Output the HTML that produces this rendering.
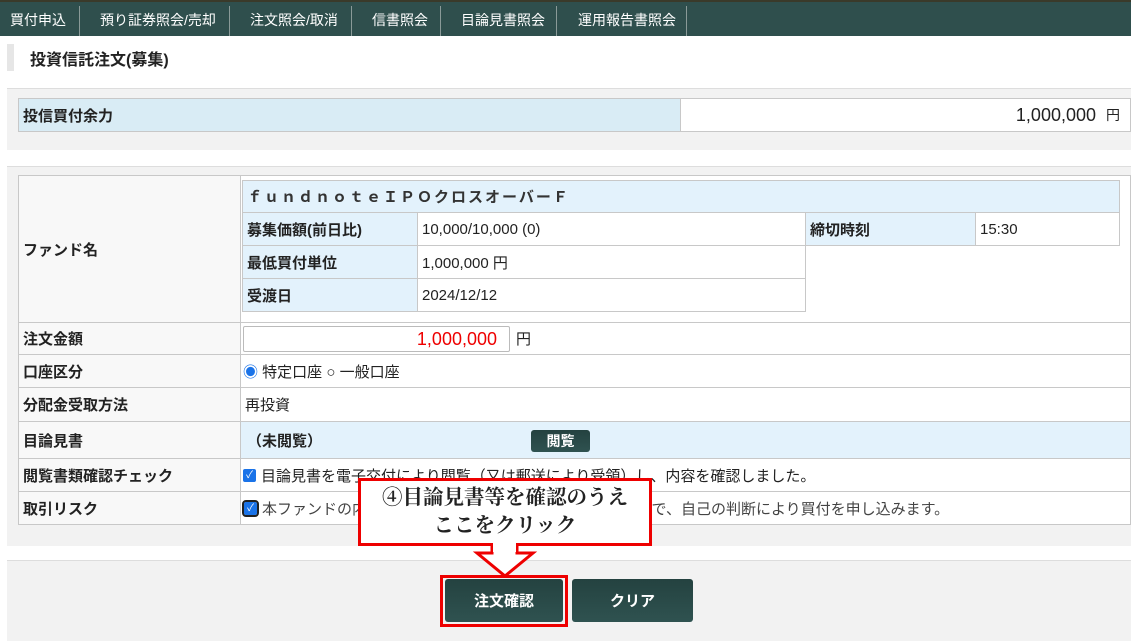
<!DOCTYPE html>
<html><head><meta charset="utf-8"><style>
*{margin:0;padding:0;box-sizing:border-box}
body{width:1131px;height:641px;background:#fff;font-family:"Liberation Sans","Noto Sans CJK JP",sans-serif;font-size:15px;color:#222;position:relative;overflow:hidden}
.a{position:absolute}
.nav{left:0;top:0;width:1131px;height:36px;background:#2f4f4d;border-top:2px solid #3a3a2a}
.nav span{position:absolute;top:8px;color:#fff;font-size:14px}
.sep{position:absolute;top:4px;width:1px;height:30px;background:#8a9a98}
.cell{position:absolute;border:1px solid #c8c8c8;display:flex;align-items:center;padding-left:4px}
.lb{background:#f8f8f8;font-weight:bold}
.bl{background:#e3f2fc;font-weight:bold}
.w{background:#fff}
.btn{position:absolute;background:linear-gradient(#244240,#2f5250);color:#fff;font-weight:bold;font-size:15px;display:flex;align-items:center;justify-content:center;border-radius:3px}
.cb{display:inline-block;width:13px;height:13px;background:#1a73e8;border-radius:2px;color:#fff;font-size:10px;line-height:13px;text-align:center;margin-right:5px;vertical-align:-1px}
</style></head><body>
<div class="a nav">
<span style="left:10px">買付申込</span><div class="sep" style="left:79px"></div>
<span style="left:100px">預り証券照会/売却</span><div class="sep" style="left:229px"></div>
<span style="left:250px">注文照会/取消</span><div class="sep" style="left:351px"></div>
<span style="left:372px">信書照会</span><div class="sep" style="left:440px"></div>
<span style="left:461px">目論見書照会</span><div class="sep" style="left:556px"></div>
<span style="left:578px">運用報告書照会</span><div class="sep" style="left:686px"></div>
</div>
<div class="a" style="left:7px;top:44px;width:7px;height:27px;background:#e6e6e6"></div>
<div class="a" style="left:30px;top:46px;font-weight:bold;font-size:16px">投資信託注文(募集)</div>

<div class="a" style="left:7px;top:88px;width:1124px;height:62px;background:#f2f2f2;border-top:1px solid #ddd"></div>
<div class="cell bl" style="left:18px;top:98px;width:663px;height:34px;background:#d9ecf5">投信買付余力</div>
<div class="cell w" style="left:680px;top:98px;width:451px;height:34px;justify-content:flex-end;padding-right:10px;font-size:18px">1,000,000 <span style="font-size:14px;margin-left:10px">円</span></div>

<div class="a" style="left:7px;top:166px;width:1124px;height:380px;background:#f2f2f2;border-top:1px solid #ddd"></div>
<div class="cell lb" style="left:18px;top:175px;width:223px;height:148px">ファンド名</div>
<div class="cell w" style="left:240px;top:175px;width:891px;height:148px"></div>
<div class="cell bl" style="left:242px;top:180px;width:878px;height:33px;font-weight:bold;letter-spacing:2px;color:#333">ｆｕｎｄｎｏｔｅＩＰＯクロスオーバーＦ</div>
<div class="cell bl" style="left:242px;top:212px;width:176px;height:34px">募集価額(前日比)</div>
<div class="cell w" style="left:417px;top:212px;width:389px;height:34px">10,000/10,000 (0)</div>
<div class="cell bl" style="left:805px;top:212px;width:171px;height:34px">締切時刻</div>
<div class="cell w" style="left:975px;top:212px;width:145px;height:34px">15:30</div>
<div class="cell bl" style="left:242px;top:245px;width:176px;height:34px">最低買付単位</div>
<div class="cell w" style="left:417px;top:245px;width:389px;height:34px">1,000,000 円</div>
<div class="cell bl" style="left:242px;top:278px;width:176px;height:34px">受渡日</div>
<div class="cell w" style="left:417px;top:278px;width:389px;height:34px">2024/12/12</div>

<div class="cell lb" style="left:18px;top:322px;width:223px;height:33px">注文金額</div>
<div class="cell w" style="left:240px;top:322px;width:891px;height:33px;padding-left:2px"><div style="width:267px;height:26px;border:1px solid #bbb;border-radius:2px;text-align:right;padding-right:12px;color:#e00;font-size:18px;line-height:24px">1,000,000</div><span style="margin-left:6px">円</span></div>
<div class="cell lb" style="left:18px;top:354px;width:223px;height:34px">口座区分</div>
<div class="cell w" style="left:240px;top:354px;width:891px;height:34px;padding-left:2px"><span style="color:#1a73e8">◉</span>&nbsp;特定口座 ○ 一般口座</div>
<div class="cell lb" style="left:18px;top:387px;width:223px;height:35px">分配金受取方法</div>
<div class="cell w" style="left:240px;top:387px;width:891px;height:35px">再投資</div>
<div class="cell lb" style="left:18px;top:421px;width:223px;height:38px">目論見書</div>
<div class="cell" style="left:240px;top:421px;width:891px;height:38px;background:#e3f2fc;font-weight:bold;padding-left:6px">（未閲覧）</div>
<div class="btn" style="left:531px;top:430px;width:59px;height:22px;font-size:14px">閲覧</div>
<div class="cell lb" style="left:18px;top:458px;width:223px;height:34px">閲覧書類確認チェック</div>
<div class="cell w" style="left:240px;top:458px;width:891px;height:34px;padding-left:2px"><span class="cb">✓</span>目論見書を電子交付により閲覧（又は郵送により受領）し、内容を確認しました。</div>
<div class="cell lb" style="left:18px;top:491px;width:223px;height:34px">取引リスク</div>
<div class="cell w" style="left:240px;top:491px;width:891px;height:34px;color:#444;padding-left:2px"><span class="cb" style="outline:2px solid #222;outline-offset:0;margin-left:1px">✓</span>本ファンドの内容と投資に伴うリスクを十分理解したうえで、自己の判断により買付を申し込みます。</div>

<div class="a" style="left:7px;top:560px;width:1124px;height:81px;background:#f2f2f2;border-top:1px solid #ddd"></div>
<div class="a" style="left:440px;top:575px;width:128px;height:52px;border:3px solid #e00"></div>
<div class="btn" style="left:445px;top:579px;width:118px;height:43px">注文確認</div>
<div class="btn" style="left:572px;top:579px;width:121px;height:43px">クリア</div>

<svg class="a" style="left:470px;top:538px" width="75" height="42"><polygon points="22,2 22,15 7,15 35,38 63,15 47,15 47,2" fill="#fff" stroke="#e00" stroke-width="3"/></svg>
<div class="a" style="left:358px;top:478px;width:294px;height:68px;border:3px solid #e00;background:#fff;font-family:'Liberation Serif','Noto Serif CJK SC',serif;font-weight:bold;font-size:20.5px;text-align:center;line-height:28px;padding-top:3px;white-space:nowrap">④目論見書等を確認のうえ<br>ここをクリック</div>
<div class="a" style="left:493px;top:540px;width:23px;height:12px;background:#fff"></div>
</body></html>
